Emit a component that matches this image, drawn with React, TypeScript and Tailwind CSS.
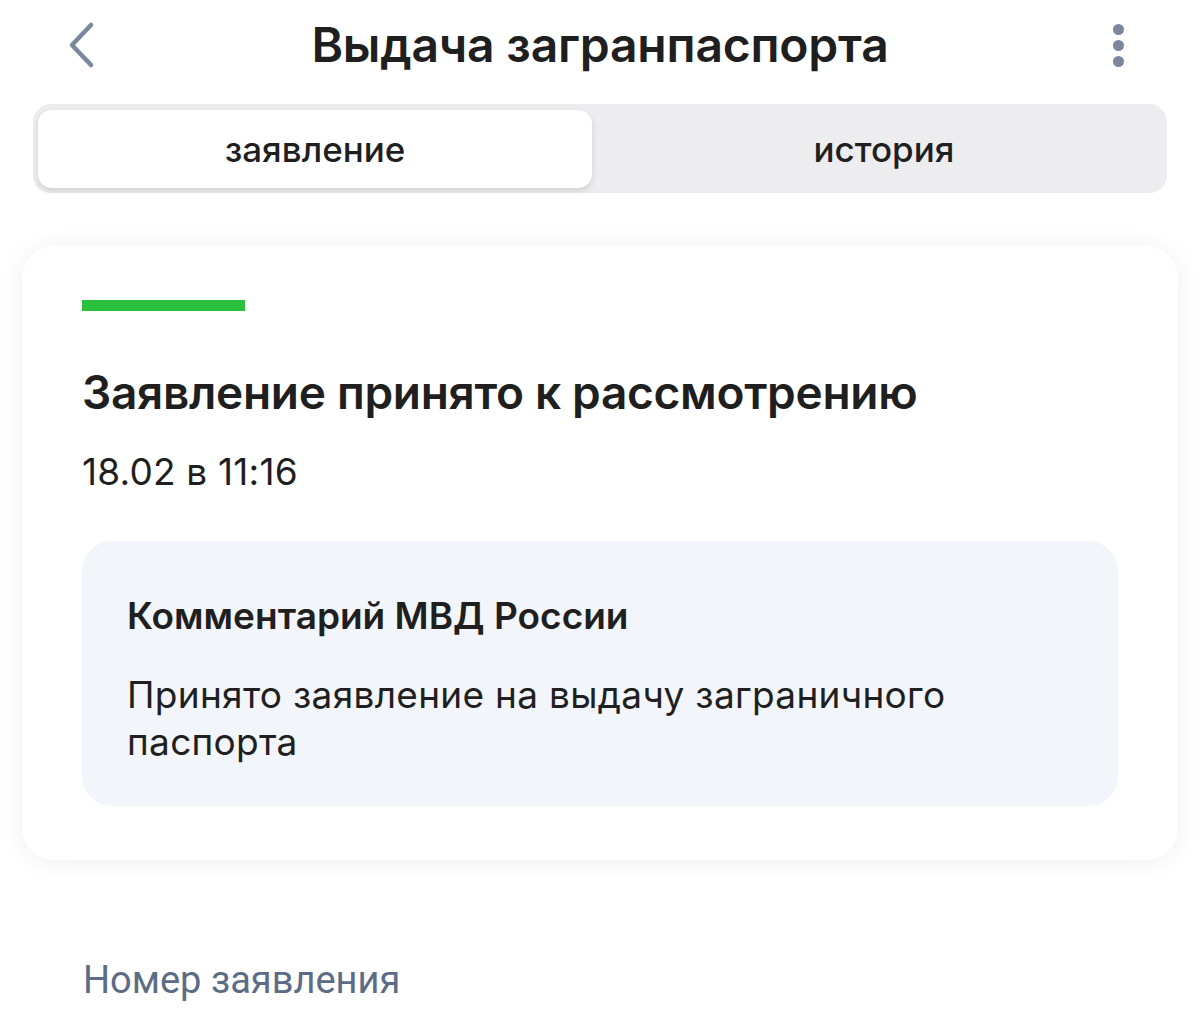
import React from 'react';

const FONT = { fontFamily: 'Inter, "Noto Sans", sans-serif' };

function BackIcon() {
  return (
    <svg width="34" height="48" viewBox="0 0 34 48" fill="none">
      <path d="M27 4 L8 24 L27 44" stroke="#7a879c" strokeWidth="4.5" strokeLinecap="round" strokeLinejoin="round" />
    </svg>
  );
}

function MoreIcon() {
  return (
    <div className="flex flex-col items-center gap-[5px]">
      <span className="block h-[11px] w-[11px] rounded-full bg-[#7a879c]" />
      <span className="block h-[11px] w-[11px] rounded-full bg-[#7a879c]" />
      <span className="block h-[11px] w-[11px] rounded-full bg-[#7a879c]" />
    </div>
  );
}

export default function App() {
  return (
    <div className="min-h-[1030px] w-[1200px] bg-white text-[#1f1f1f]" style={FONT}>
      <header className="flex h-[90px] items-center justify-between px-[64px]">
        <BackIcon />
        <h1 className="text-[48px] font-semibold tracking-[-0.2px]">Выдача загранпаспорта</h1>
        <div className="flex w-[34px] justify-end pr-[12px]">
          <MoreIcon />
        </div>
      </header>

      <div className="mx-[33px] mt-[14px] flex h-[89px] rounded-[18px] bg-[#ededf0] pt-[6px] pr-[5px] pb-[5px] pl-[5px]">
        <button className="flex w-[554px] items-center justify-center rounded-[14px] bg-white text-[35px] font-medium shadow-[0_3px_6px_rgba(0,0,0,0.12)]">
          заявление
        </button>
        <button className="flex flex-1 items-center justify-center pl-[14px] text-[35px] font-medium">
          история
        </button>
      </div>

      <section className="mx-[22px] mt-[53px] rounded-[32px] bg-white px-[60px] pt-[54px] pb-[54px] shadow-[0_2px_24px_rgba(30,50,90,0.08)]">
        <div className="h-[11px] w-[163px] bg-[#2ac03c]" />
        <h2 className="mt-[53px] text-[46px] font-semibold leading-[56px] tracking-[-0.3px]">
          Заявление принято к рассмотрению
        </h2>
        <p className="mt-[30px] text-[37px] leading-[44px] tracking-[0.2px]">18.02 в 11:16</p>
        <div className="mt-[47px] rounded-[30px] bg-[#f2f5fa] px-[45px] pt-[52px] pb-[41px]">
          <h3 className="text-[37px] font-semibold leading-[46px]">Комментарий МВД России</h3>
          <p className="mt-[32px] text-[37px] leading-[47px] tracking-[0.3px]">
            Принято заявление на выдачу заграничного
            <br />
            паспорта
          </p>
        </div>
      </section>

      <p className="mt-[98px] px-[83px] text-[38px] leading-[44px] text-[#5c6b86]" style={{ fontFamily: 'Roboto, sans-serif' }}>
        Номер заявления
      </p>
    </div>
  );
}
